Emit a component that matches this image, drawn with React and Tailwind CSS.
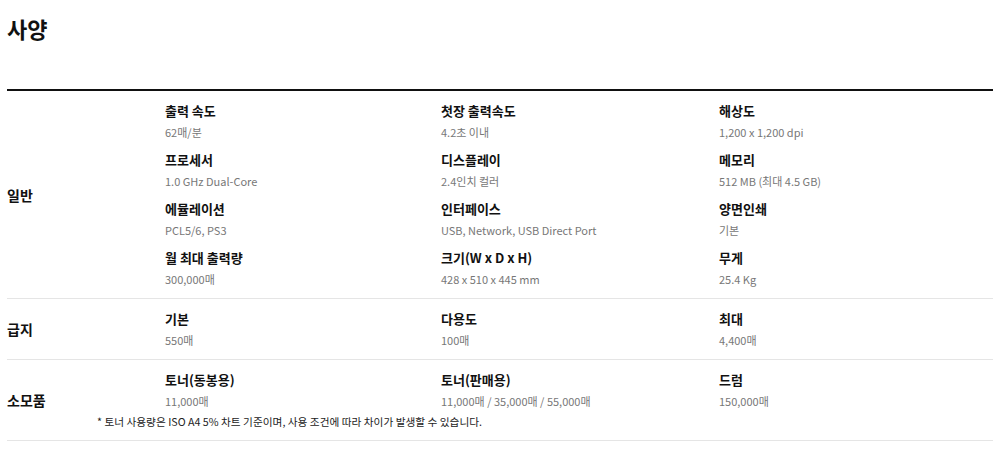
const groups = [
  {
    name: '일반',
    items: [
      ['출력 속도', '62매/분'],
      ['첫장 출력속도', '4.2초 이내'],
      ['해상도', '1,200 x 1,200 dpi'],
      ['프로세서', '1.0 GHz Dual-Core'],
      ['디스플레이', '2.4인치 컬러'],
      ['메모리', '512 MB (최대 4.5 GB)'],
      ['에뮬레이션', 'PCL5/6, PS3'],
      ['인터페이스', 'USB, Network, USB Direct Port'],
      ['양면인쇄', '기본'],
      ['월 최대 출력량', '300,000매'],
      ['크기(W x D x H)', '428 x 510 x 445 mm'],
      ['무게', '25.4 Kg'],
    ],
  },
  {
    name: '급지',
    items: [
      ['기본', '550매'],
      ['다용도', '100매'],
      ['최대', '4,400매'],
    ],
  },
  {
    name: '소모품',
    items: [
      ['토너(동봉용)', '11,000매'],
      ['토너(판매용)', '11,000매 / 35,000매 / 55,000매'],
      ['드럼', '150,000매'],
    ],
    note: '* 토너 사용량은 ISO A4 5% 차트 기준이며, 사용 조건에 따라 차이가 발생할 수 있습니다.',
  },
]

function Spec({ label, value }) {
  return (
    <div>
      <div className="text-[13px] leading-[20px] font-bold text-[#111]">{label}</div>
      <div className="mt-px text-[11px] leading-[20px] text-[#777]">{value}</div>
    </div>
  )
}

export default function App() {
  return (
    <div
      className="min-h-screen bg-white px-[7px] pt-[14px]"
      style={{ fontFamily: '"Noto Sans CJK KR", "Noto Sans", sans-serif' }}
    >
      <h2 className="text-[22px] leading-[28px] font-bold text-[#111]">사양</h2>

      <div className="mt-[47px] border-t-[2px] border-[#111] w-[986px]">
        {groups.map((g) => (
          <div key={g.name} className="flex items-center border-b border-[#e5e5e5] pt-[10px] pb-[9px]">
            <div className="w-[158px] shrink-0 text-[14px] font-bold text-[#111]">{g.name}</div>
            <div className="flex-1">
              <div className="grid grid-cols-[276px_278px_1fr] gap-y-[8px]">
                {g.items.map(([l, v]) => (
                  <Spec key={l} label={l} value={v} />
                ))}
              </div>
              {g.note && (
                <div className="-ml-[68px] mt-[2px] text-[10.7px] leading-[18px] text-[#222]">{g.note}</div>
              )}
            </div>
          </div>
        ))}
      </div>
    </div>
  )
}
